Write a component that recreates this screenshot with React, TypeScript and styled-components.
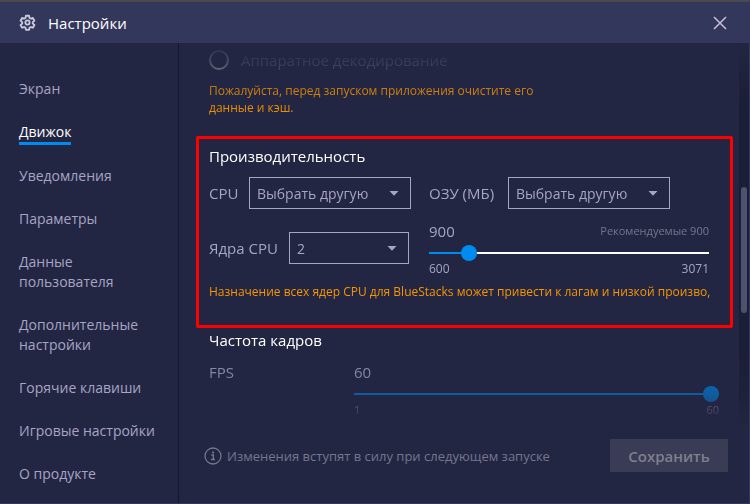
import React, { useState } from 'react';
import styled, { createGlobalStyle } from 'styled-components';

const color = {
  panel: '#232642',
  header: '#34375c',
  text: '#a7a4c5',
  muted: '#76758f',
  white: '#ffffff',
  accent: '#008bf0',
  warning: '#f79600',
};

const GlobalStyle = createGlobalStyle`
  *, *::before, *::after { box-sizing: border-box; }
  body { margin: 0; background: ${color.panel}; }
  body, button, input, select { font-family: "Open Sans", "Noto Sans", sans-serif; }
`;

const Window = styled.div`
  display: flex;
  flex-direction: column;
  min-height: 100vh;
  border: 1px solid ${color.header};
  border-top: 2px solid #4b4a4d;
  border-left: 0;
  background: ${color.panel};
  color: ${color.text};
  font-size: 15px;
  line-height: 20px;
`;

const Header = styled.header`
  display: flex;
  align-items: center;
  gap: 12px;
  height: 41px;
  padding: 0 20px 0 19px;
  background: ${color.header};
`;

const WindowTitle = styled.h1`
  flex: 1;
  margin: 0;
  color: ${color.white};
  font-size: 15px;
  font-weight: 400;
`;

const CloseButton = styled.button`
  display: flex;
  padding: 0;
  border: 0;
  background: none;
  color: #bfbdd6;
`;

const Body = styled.div`
  display: flex;
  flex: 1;
`;

const Sidebar = styled.nav`
  flex: 0 0 179px;
  padding: 36px 16px 0 19px;
  border-right: 1px solid #15172b;
  font-size: 14px;
`;

const NavList = styled.ul`
  display: flex;
  flex-direction: column;
  align-items: flex-start;
  gap: 23px;
  margin: 0;
  padding: 0;
  list-style: none;
`;

const NavLink = styled.a<{ $active?: boolean }>`
  display: block;
  margin-bottom: ${(p) => (p.$active ? '-2px' : '0')};
  border-bottom: ${(p) => (p.$active ? `3px solid ${color.accent}` : '0')};
  color: ${(p) => (p.$active ? color.white : color.text)};
  text-decoration: none;
`;

const Main = styled.main`
  display: flex;
  flex: 1;
  flex-direction: column;
  min-width: 0;
`;

const ScrollArea = styled.div`
  display: flex;
  gap: 6px;
  mask-image: linear-gradient(
    to bottom,
    transparent,
    rgb(0 0 0 / 0.25) 20px,
    rgb(0 0 0 / 0.8) 48px,
    #000 76px,
    #000 calc(100% - 80px),
    rgb(0 0 0 / 0.5) calc(100% - 28px),
    transparent
  );
`;

const Content = styled.div`
  flex: 1;
  min-width: 0;
  padding: 7px 0 8px 17px;
`;

const ScrollTrack = styled.div`
  display: flex;
  flex: 0 0 10px;
  flex-direction: column;
  padding: 144px 2px 0;
  background: #1c1d36;
`;

const ScrollThumb = styled.div`
  height: 126px;
  border-radius: 3px;
  background: #4e526f;
`;

const Decoding = styled.section`
  padding: 0 13px;
`;

const RadioLabel = styled.label`
  display: flex;
  align-items: center;
  gap: 12px;
  height: 20px;
  color: #7b7a98;
`;

const Radio = styled.input`
  appearance: none;
  width: 20px;
  height: 20px;
  margin: 0;
  border: 2px solid #c6c5d2;
  border-radius: 50%;
`;

const Note = styled.p`
  max-width: 350px;
  margin: 12px 0 0;
  color: ${color.warning};
  font-size: 12px;
  line-height: 17px;
`;

const Highlighted = styled.section`
  margin-top: 20px;
  padding: 7px 11px 24px 10px;
  border: 3px solid #ff0000;
  border-radius: 2px;
`;

const SectionTitle = styled.h2`
  margin: 0;
  color: ${color.white};
  font-size: 15px;
  font-weight: 500;
  line-height: 20px;
`;

const FieldGrid = styled.div`
  display: grid;
  grid-template-columns: 220px minmax(0, 1fr);
  row-gap: 12px;
  margin-top: 11px;
`;

const Field = styled.div<{ $label: number; $control: number; $low?: boolean }>`
  display: grid;
  grid-template-columns: ${(p) => p.$label}px ${(p) => p.$control}px;
  align-items: center;
  align-self: start;
  padding-top: ${(p) => (p.$low ? '11px' : '0')};
`;

const SelectBox = styled.div`
  display: grid;
  align-items: center;

  > * { grid-area: 1 / 1; }
  > svg { justify-self: end; margin-right: 12px; pointer-events: none; }
`;

const Select = styled.select`
  appearance: none;
  width: 100%;
  height: 32px;
  padding: 0 20px 0 7px;
  border: 1px solid ${color.text};
  border-radius: 0;
  background: transparent;
  color: ${color.text};
  font-size: 14px;
`;

const SliderField = styled.div`
  display: flex;
  flex-direction: column;
  padding-right: 10px;
`;

const Spread = styled.div`
  display: flex;
  align-items: center;
  justify-content: space-between;
`;

const Hint = styled.span`
  color: ${color.muted};
  font-size: 11px;
`;

const Limits = styled(Spread)<{ $small?: boolean }>`
  font-size: ${(p) => (p.$small ? '11px' : '12px')};
  line-height: 16px;
`;

const Slider = styled.input`
  appearance: none;
  width: 100%;
  height: 16px;
  margin: 4px 0 0;
  background: linear-gradient(${color.accent}, ${color.accent}) left center / var(--fill) 2px no-repeat,
    linear-gradient(${color.white}, ${color.white}) center / 100% 2px no-repeat;

  &::-webkit-slider-thumb {
    appearance: none;
    width: 16px;
    height: 16px;
    border-radius: 50%;
    background: ${color.accent};
  }
`;

const Warning = styled.p`
  margin: 6px 0 0;
  color: ${color.warning};
  font-size: 12px;
  line-height: 18px;
  white-space: nowrap;
`;

const FrameRate = styled.section`
  padding: 2px 14px 0 13px;
`;

const FrameRow = styled.div`
  display: grid;
  grid-template-columns: 145px minmax(0, 1fr);
  margin-top: 12px;
`;

const FrameSlider = styled.div`
  display: flex;
  flex-direction: column;
`;

const Footer = styled.footer`
  display: flex;
  align-items: center;
  gap: 5px;
  margin-top: auto;
  padding: 13px 21px 31px 25px;
  color: ${color.muted};
  font-size: 13px;
`;

const FooterText = styled.span`
  flex: 1;
`;

const SaveButton = styled.button`
  width: 118px;
  height: 33px;
  padding: 0;
  border: 0;
  background: #3a3c55;
  color: #7e7f90;
  font-size: 15px;
  font-weight: 600;
`;

const GearIcon = () => (
  <svg width="17" height="17" viewBox="0 0 24 24" fill="none" stroke="#c9c8dd" strokeWidth="2.6" strokeLinejoin="round" aria-hidden="true">
    <path d="M9.800 2.500h4.400l.6 3 1.900 1.100 2.900-1 2.200 3.800-2.300 2v2.200l2.300 2-2.200 3.800-2.900-1-1.900 1.100-.6 3H9.800l-.6-3-1.900-1.100-2.900 1-2.200-3.800 2.300-2v-2.200l-2.300-2 2.200-3.800 2.900 1 1.900-1.100z" />
    <circle cx="12" cy="12" r="3" />
  </svg>
);

const CloseIcon = () => (
  <svg width="18" height="18" viewBox="0 0 18 18" fill="none" stroke="currentColor" strokeWidth="1.6" aria-hidden="true">
    <path d="M3 3l12 12M15 3L3 15" />
  </svg>
);

const CaretIcon = () => (
  <svg width="10" height="5" viewBox="0 0 10 5" fill={color.text} aria-hidden="true">
    <path d="M.5 0h9L5 4.800z" />
  </svg>
);

const InfoIcon = () => (
  <svg width="18" height="18" viewBox="0 0 18 18" fill="none" stroke="currentColor" aria-hidden="true">
    <circle cx="9" cy="9" r="8" strokeWidth="1.300" />
    <path d="M7.300 8h2v4.500M7 12.500h4" strokeWidth="1.400" />
    <path d="M8.200 5.500h1.800" strokeWidth="1.800" />
  </svg>
);

const sections = [
  'Экран',
  'Движок',
  'Уведомления',
  'Параметры',
  'Данные пользователя',
  'Дополнительные настройки',
  'Горячие клавиши',
  'Игровые настройки',
  'О продукте',
];

interface SelectFieldProps {
  id: string;
  label: string;
  options: string[];
  labelWidth: number;
  controlWidth: number;
  low?: boolean;
}

const SelectField = ({ id, label, options, labelWidth, controlWidth, low }: SelectFieldProps) => (
  <Field $label={labelWidth} $control={controlWidth} $low={low}>
    <label htmlFor={id}>{label}</label>
    <SelectBox>
      <Select id={id}>
        {options.map((o) => (
          <option key={o}>{o}</option>
        ))}
      </Select>
      <CaretIcon />
    </SelectBox>
  </Field>
);

interface RangeProps {
  id: string;
  min: number;
  max: number;
  value: number;
  onChange: (value: number) => void;
}

const Range = ({ id, min, max, value, onChange }: RangeProps) => (
  <Slider
    id={id}
    type="range"
    min={min}
    max={max}
    value={value}
    onChange={(e) => onChange(Number(e.target.value))}
    style={{ '--fill': `${((value - min) / (max - min)) * 100}%` } as React.CSSProperties}
  />
);

export default function App() {
  const [memory, setMemory] = useState(900);
  const [fps, setFps] = useState(60);

  return (
    <>
      <GlobalStyle />
      <Window>
        <Header>
          <GearIcon />
          <WindowTitle>Настройки</WindowTitle>
          <CloseButton aria-label="Закрыть">
            <CloseIcon />
          </CloseButton>
        </Header>
        <Body>
          <Sidebar>
            <NavList>
              {sections.map((name) => (
                <li key={name}>
                  <NavLink href="#" $active={name === 'Движок'}>
                    {name}
                  </NavLink>
                </li>
              ))}
            </NavList>
          </Sidebar>
          <Main>
            <ScrollArea>
              <Content>
                <Decoding>
                  <RadioLabel>
                    <Radio type="radio" name="decoding" />
                    Аппаратное декодирование
                  </RadioLabel>
                  <Note>Пожалуйста, перед запуском приложения очистите его данные и кэш.</Note>
                </Decoding>
                <Highlighted>
                  <SectionTitle>Производительность</SectionTitle>
                  <FieldGrid>
                    <SelectField id="cpu" label="CPU" options={['Выбрать другую']} labelWidth={40} controlWidth={162} />
                    <SelectField id="ram" label="ОЗУ (МБ)" options={['Выбрать другую']} labelWidth={79} controlWidth={162} />
                    <SelectField id="cores" label="Ядра CPU" options={['2', '1', '4']} labelWidth={80} controlWidth={120} low />
                    <SliderField>
                      <Spread>
                        <label htmlFor="memory">{memory}</label>
                        <Hint>Рекомендуемые 900</Hint>
                      </Spread>
                      <Range id="memory" min={600} max={3071} value={memory} onChange={setMemory} />
                      <Limits>
                        <span>600</span>
                        <span>3071</span>
                      </Limits>
                    </SliderField>
                  </FieldGrid>
                  <Warning>
                    Назначение всех ядер CPU для BlueStacks может привести к лагам и низкой произво,
                  </Warning>
                </Highlighted>
                <FrameRate>
                  <SectionTitle>Частота кадров</SectionTitle>
                  <FrameRow>
                    <label htmlFor="fps">FPS</label>
                    <FrameSlider>
                      <span>{fps}</span>
                      <Range id="fps" min={1} max={60} value={fps} onChange={setFps} />
                      <Limits $small>
                        <span>1</span>
                        <span>60</span>
                      </Limits>
                    </FrameSlider>
                  </FrameRow>
                </FrameRate>
              </Content>
              <ScrollTrack>
                <ScrollThumb />
              </ScrollTrack>
            </ScrollArea>
            <Footer>
              <InfoIcon />
              <FooterText>Изменения вступят в силу при следующем запуске</FooterText>
              <SaveButton>Сохранить</SaveButton>
            </Footer>
          </Main>
        </Body>
      </Window>
    </>
  );
}
